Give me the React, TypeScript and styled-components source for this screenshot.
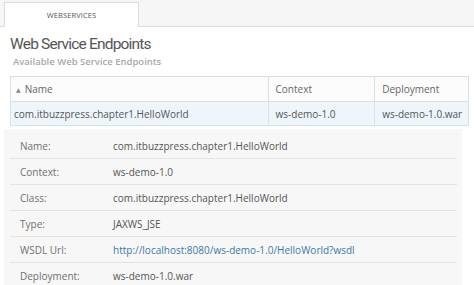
import React from 'react';
import styled, { createGlobalStyle } from 'styled-components';

const GlobalStyle = createGlobalStyle`
  body {
    margin: 0;
    background: #fff;
    font-family: 'Open Sans', 'DejaVu Sans', sans-serif;
    color: #555;
  }
`;

const StyledPage = styled.div`
  width: 474px;
  height: 285px;
  overflow: hidden;
`;

const StyledTabBar = styled.div`
  display: flex;
  align-items: flex-end;
  height: 27px;
  padding-left: 4px;
  background-color: #f6f6f6;
  border-bottom: 1px solid #dcdcdc;
  box-sizing: border-box;
`;

const StyledTab = styled.div`
  width: 135px;
  height: 25px;
  margin-bottom: -1px;
  display: flex;
  align-items: center;
  justify-content: center;
  background: #fff;
  border: 1px solid #dcdcdc;
  border-bottom: none;
  box-sizing: border-box;
  font-size: 7.5px;
  color: #555;
  letter-spacing: 0.1px;
`;

const StyledTitle = styled.div`
  margin: 6px 0 0 10px;
  font-family: Roboto, 'Open Sans', sans-serif;
  font-size: 15.5px;
  letter-spacing: -0.8px;
  line-height: 22px;
  color: #555;
`;

const StyledSubtitle = styled.div`
  margin: 0 0 0 13px;
  font-size: 9.5px;
  font-weight: 600;
  line-height: 14px;
  color: #a8a8a8;
`;

const StyledTable = styled.table`
  margin: 7px 0 0 10px;
  width: 459px;
  border-collapse: collapse;
  font-size: 10px;
`;

const StyledHeadCell = styled.th<{ $w: number; $pad: number }>`
  width: ${(p) => p.$w}px;
  height: 25px;
  padding: 0 0 0 ${(p) => p.$pad}px;
  text-align: left;
  font-weight: 400;
  color: #666;
  background: #fcfcfc;
  border: 1px solid #dedede;
  box-sizing: border-box;
`;

const StyledCell = styled.td<{ $pad: number }>`
  height: 24px;
  padding: 0 0 0 ${(p) => p.$pad}px;
  color: #555;
  background: #eef6fb;
  border: 1px solid #d6e3ec;
  box-sizing: border-box;
`;

const StyledArrow = styled.span`
  font-size: 6px;
  color: #888;
  margin-right: 4px;
  vertical-align: 1px;
`;

const StyledDetails = styled.div`
  margin: 3px 0 0 4px;
  width: 458px;
  padding: 4px 5px 0 6px;
  background: #f7f7f7;
  box-sizing: border-box;
`;

const StyledDetailRow = styled.div<{ $last?: boolean }>`
  display: grid;
  grid-template-columns: 93px 1fr;
  align-items: center;
  height: 26px;
  padding-left: 10px;
  border-bottom: ${(p) => (p.$last ? 'none' : '1px solid #e3e3e3')};
  box-sizing: border-box;
  font-size: 10px;
`;

const StyledLabel = styled.div`
  color: #707070;
`;

const StyledValue = styled.div<{ $link?: boolean }>`
  color: ${(p) => (p.$link ? '#3d78a8' : '#555')};
`;

const details: { label: string; value: string; link?: boolean }[] = [
  { label: 'Name:', value: 'com.itbuzzpress.chapter1.HelloWorld' },
  { label: 'Context:', value: 'ws-demo-1.0' },
  { label: 'Class:', value: 'com.itbuzzpress.chapter1.HelloWorld' },
  { label: 'Type:', value: 'JAXWS_JSE' },
  { label: 'WSDL Url:', value: 'http://localhost:8080/ws-demo-1.0/HelloWorld?wsdl', link: true },
  { label: 'Deployment:', value: 'ws-demo-1.0.war' },
];

function App() {
  return (
    <StyledPage>
      <GlobalStyle />
      <StyledTabBar>
        <StyledTab>WEBSERVICES</StyledTab>
      </StyledTabBar>
      <StyledTitle>Web Service Endpoints</StyledTitle>
      <StyledSubtitle>Available Web Service Endpoints</StyledSubtitle>
      <StyledTable>
        <thead>
          <tr>
            <StyledHeadCell $w={258} $pad={5}>
              <StyledArrow>▲</StyledArrow>Name
            </StyledHeadCell>
            <StyledHeadCell $w={107} $pad={7}>Context</StyledHeadCell>
            <StyledHeadCell $w={94} $pad={7}>Deployment</StyledHeadCell>
          </tr>
        </thead>
        <tbody>
          <tr>
            <StyledCell $pad={3}>com.itbuzzpress.chapter1.HelloWorld</StyledCell>
            <StyledCell $pad={7}>ws-demo-1.0</StyledCell>
            <StyledCell $pad={7}>ws-demo-1.0.war</StyledCell>
          </tr>
        </tbody>
      </StyledTable>
      <StyledDetails>
        {details.map((d, i) => (
          <StyledDetailRow key={d.label} $last={i === details.length - 1}>
            <StyledLabel>{d.label}</StyledLabel>
            <StyledValue $link={d.link}>{d.value}</StyledValue>
          </StyledDetailRow>
        ))}
      </StyledDetails>
    </StyledPage>
  );
}

export default App;
